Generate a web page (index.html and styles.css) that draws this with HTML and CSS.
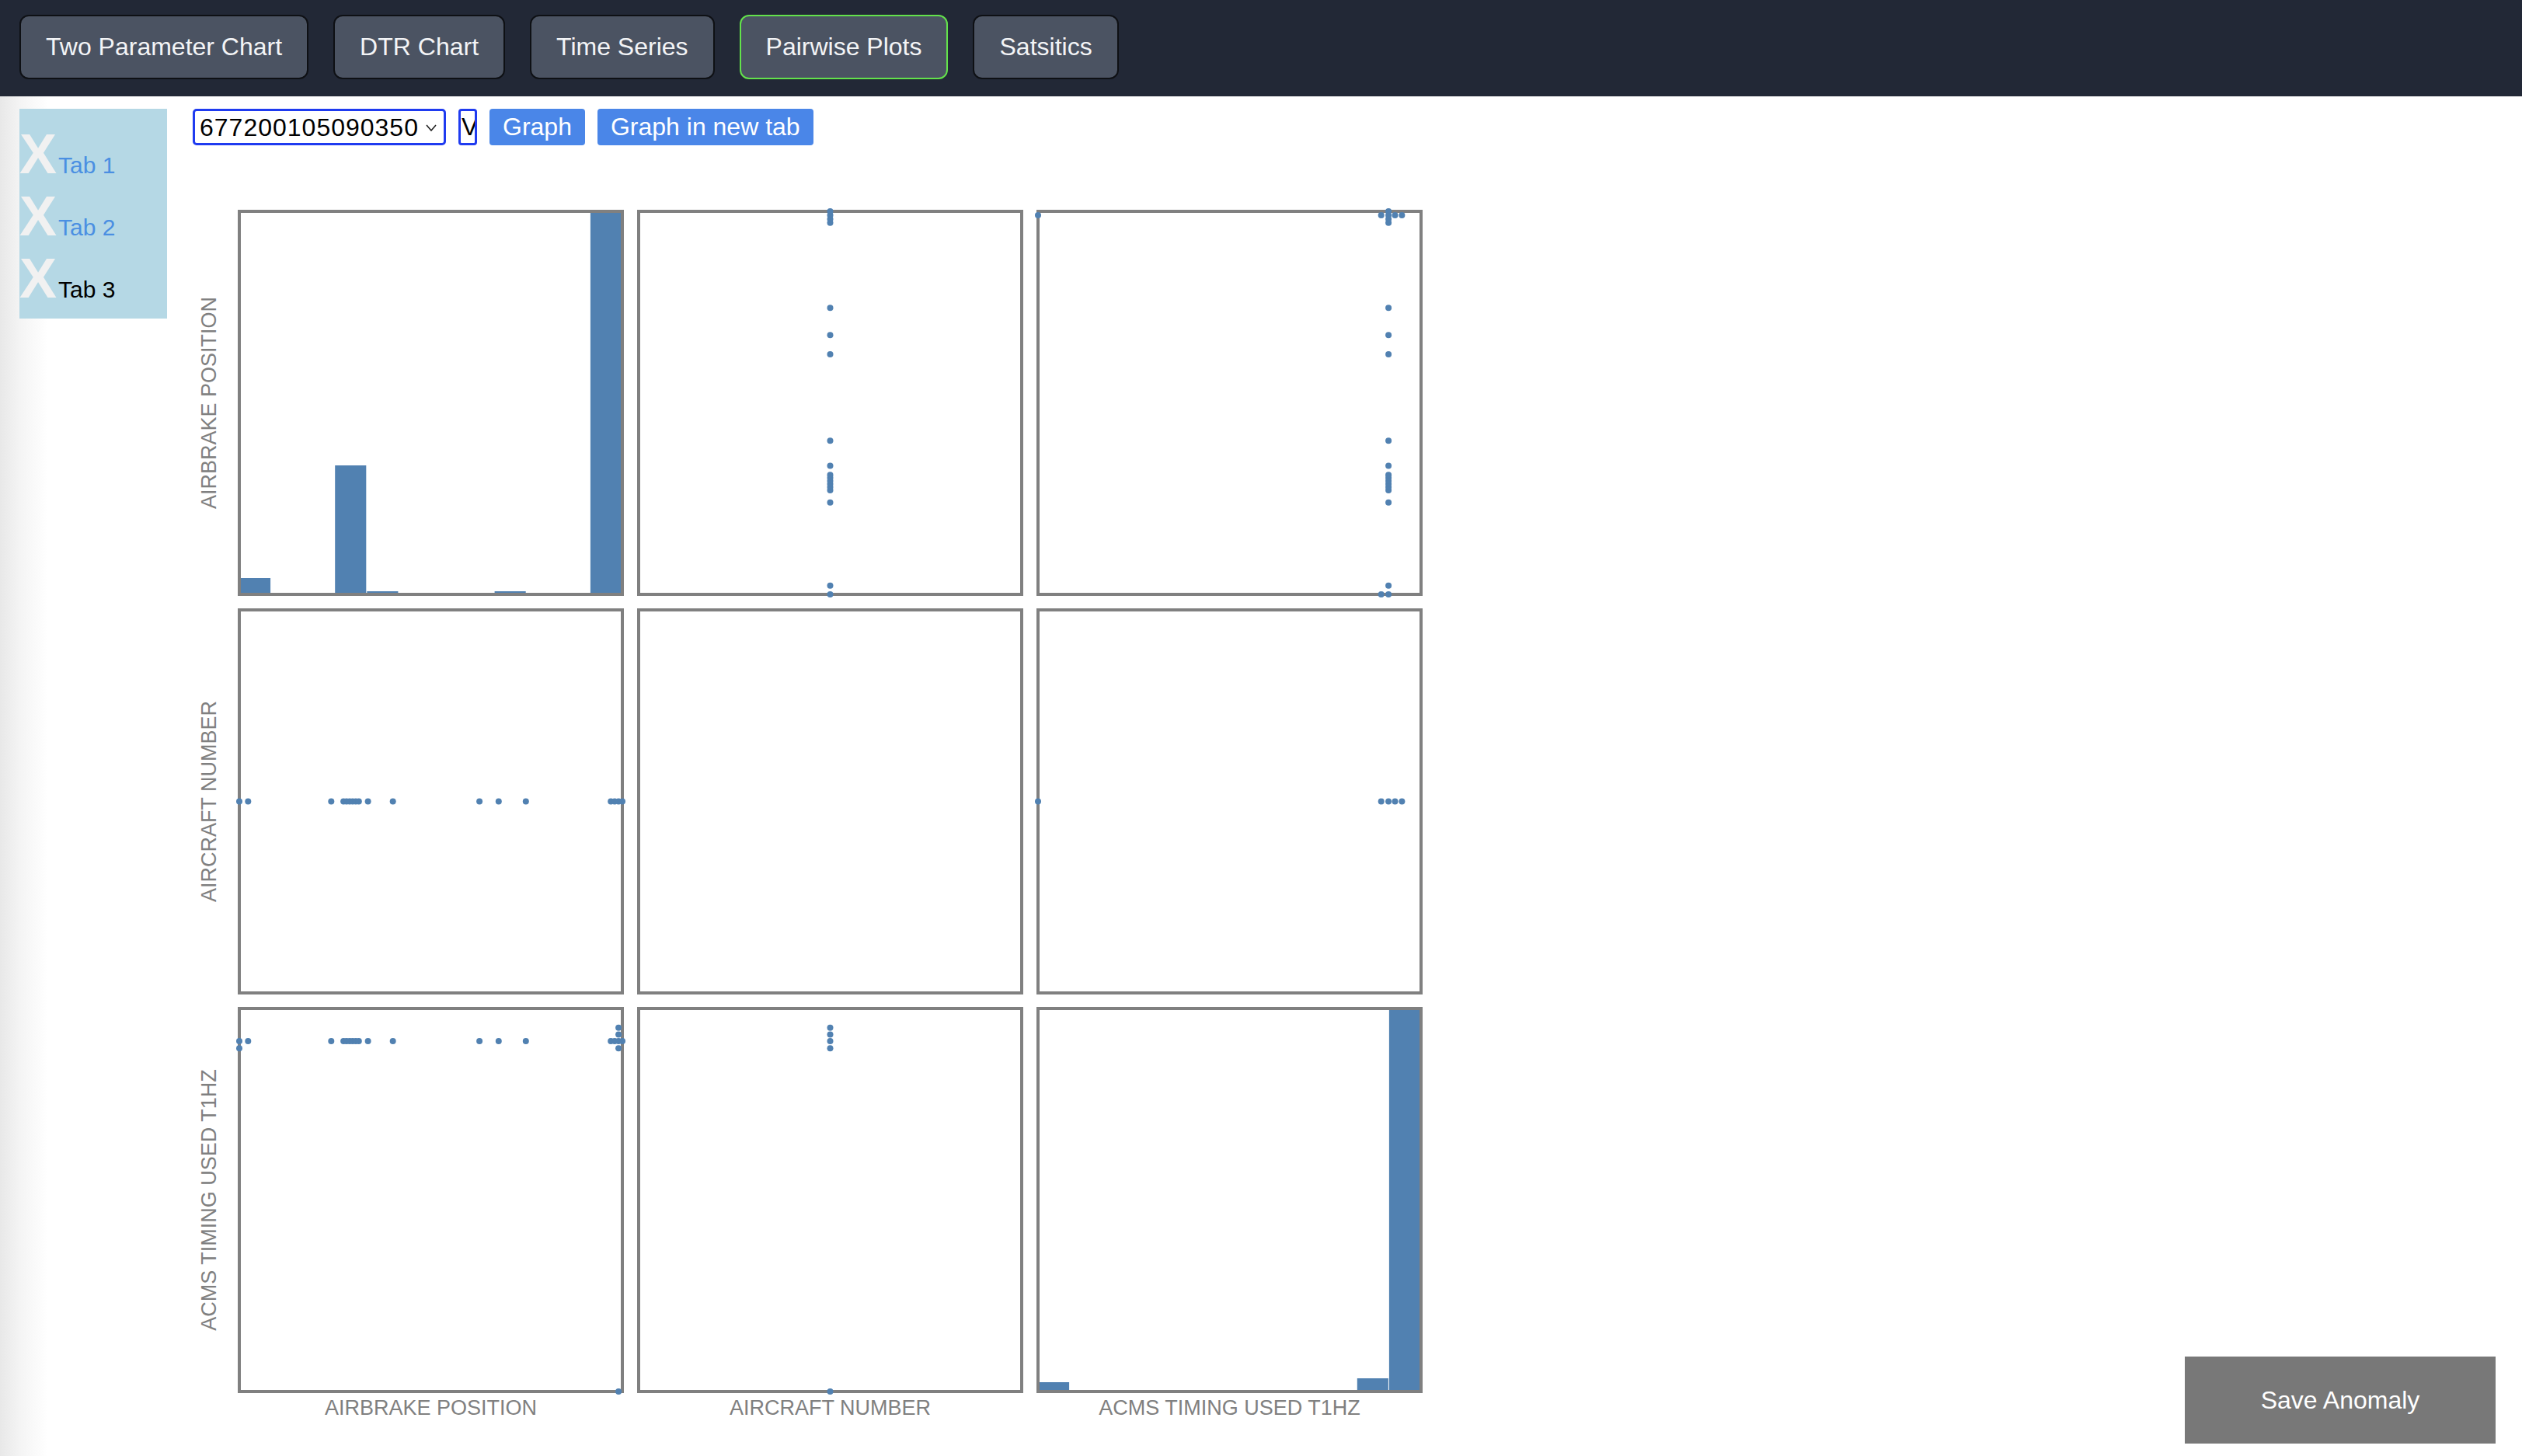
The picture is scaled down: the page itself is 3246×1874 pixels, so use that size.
FILE: index.html
```html
<!DOCTYPE html>
<html lang="en">
<head>
<meta charset="utf-8">
<title>Pairwise Plots</title>
<link rel="stylesheet" href="styles.css">
</head>
<body>
<nav class="topnav">
  <button class="nav-btn">Two Parameter Chart</button>
  <button class="nav-btn">DTR Chart</button>
  <button class="nav-btn">Time Series</button>
  <button class="nav-btn active">Pairwise Plots</button>
  <button class="nav-btn">Satsitics</button>
</nav>

<div class="layout">
  <aside class="sidebar">
    <div class="tab"><span class="tab-x">X</span><span class="tab-label">Tab 1</span></div>
    <div class="tab"><span class="tab-x">X</span><span class="tab-label">Tab 2</span></div>
    <div class="tab"><span class="tab-x">X</span><span class="tab-label current">Tab 3</span></div>
  </aside>

  <main class="content">
    <div class="controls">
      <label class="select-box">
        <select class="id-select"><option>677200105090350</option></select>
        <svg class="chevron" width="14" height="9" viewBox="0 0 14 9"><polyline points="1,1 7,8 13,1" fill="none" stroke="#222" stroke-width="1.6"/></svg>
      </label>
      <input class="v-input" type="text" value="V">
      <button class="graph-btn">Graph</button>
      <button class="graph-btn">Graph in new tab</button>
    </div>

    <div class="matrix">
      <!-- row 1 -->
      <svg class="ylabel" width="41" height="497" viewBox="0 0 41 497"><text transform="rotate(-90)" x="-248.5" y="30" text-anchor="middle">AIRBRAKE POSITION</text></svg>
      <svg class="panel" width="497" height="497" viewBox="0 0 497 497">
        <rect class="bg" x="2" y="2" width="493" height="493"/>
        <rect class="bar" x="2" y="474" width="40.1" height="21"/>
        <rect class="bar" x="84.2" y="493" width="40.1" height="2"/>
        <rect class="bar" x="125.2" y="329" width="40.1" height="166"/>
        <rect class="bar" x="166.3" y="491" width="40.1" height="4"/>
        <rect class="bar" x="289.6" y="493" width="40.1" height="2"/>
        <rect class="bar" x="330.6" y="491" width="40.1" height="4"/>
        <rect class="bar" x="453.9" y="2" width="41.1" height="493"/>
        <rect class="frame" x="2" y="2" width="493" height="493"/>
      </svg>
      <svg class="panel" width="497" height="497" viewBox="0 0 497 497">
        <rect class="bg frame" x="2" y="2" width="493" height="493"/>
        <g class="dots">
          <circle cx="248.5" cy="495" r="4"/><circle cx="248.5" cy="483.7" r="4"/><circle cx="248.5" cy="376.7" r="4"/>
          <circle cx="248.5" cy="360.9" r="4"/><circle cx="248.5" cy="357" r="4"/><circle cx="248.5" cy="353" r="4"/>
          <circle cx="248.5" cy="349.1" r="4"/><circle cx="248.5" cy="345.1" r="4"/><circle cx="248.5" cy="341.2" r="4"/>
          <circle cx="248.5" cy="329.4" r="4"/><circle cx="248.5" cy="297.3" r="4"/><circle cx="248.5" cy="185.9" r="4"/>
          <circle cx="248.5" cy="161.2" r="4"/><circle cx="248.5" cy="126.2" r="4"/><circle cx="248.5" cy="16.8" r="4"/>
          <circle cx="248.5" cy="11.9" r="4"/><circle cx="248.5" cy="6.9" r="4"/><circle cx="248.5" cy="2" r="4"/>
        </g>
      </svg>
      <svg class="panel" width="497" height="497" viewBox="0 0 497 497">
        <rect class="bg frame" x="2" y="2" width="493" height="493"/>
        <g class="dots">
          <circle cx="453.1" cy="495" r="4"/><circle cx="443.7" cy="495" r="4"/><circle cx="453.1" cy="483.7" r="4"/>
          <circle cx="453.1" cy="376.7" r="4"/><circle cx="453.1" cy="360.9" r="4"/><circle cx="453.1" cy="357" r="4"/>
          <circle cx="453.1" cy="353" r="4"/><circle cx="453.1" cy="349.1" r="4"/><circle cx="453.1" cy="345.1" r="4"/>
          <circle cx="453.1" cy="341.2" r="4"/><circle cx="453.1" cy="329.4" r="4"/><circle cx="453.1" cy="297.3" r="4"/>
          <circle cx="453.1" cy="185.9" r="4"/><circle cx="453.1" cy="161.2" r="4"/><circle cx="453.1" cy="126.2" r="4"/>
          <circle cx="453.1" cy="16.8" r="4"/><circle cx="453.1" cy="11.9" r="4"/><circle cx="453.1" cy="6.9" r="4"/>
          <circle cx="453.1" cy="2" r="4"/><circle cx="443.7" cy="6.9" r="4"/><circle cx="461.5" cy="6.9" r="4"/>
          <circle cx="470.4" cy="6.9" r="4"/><circle cx="2" cy="6.9" r="4"/>
        </g>
      </svg>

      <!-- row 2 -->
      <svg class="ylabel" width="41" height="497" viewBox="0 0 41 497"><text transform="rotate(-90)" x="-248.5" y="30" text-anchor="middle">AIRCRAFT NUMBER</text></svg>
      <svg class="panel" width="497" height="497" viewBox="0 0 497 497">
        <rect class="bg frame" x="2" y="2" width="493" height="493"/>
        <g class="dots">
          <circle cx="2" cy="248.5" r="4"/><circle cx="13.3" cy="248.5" r="4"/><circle cx="120.3" cy="248.5" r="4"/>
          <circle cx="136.1" cy="248.5" r="4"/><circle cx="140" cy="248.5" r="4"/><circle cx="144" cy="248.5" r="4"/>
          <circle cx="147.9" cy="248.5" r="4"/><circle cx="151.9" cy="248.5" r="4"/><circle cx="155.8" cy="248.5" r="4"/>
          <circle cx="167.6" cy="248.5" r="4"/><circle cx="199.7" cy="248.5" r="4"/><circle cx="311.1" cy="248.5" r="4"/>
          <circle cx="335.8" cy="248.5" r="4"/><circle cx="370.8" cy="248.5" r="4"/><circle cx="480.2" cy="248.5" r="4"/>
          <circle cx="485.1" cy="248.5" r="4"/><circle cx="490.1" cy="248.5" r="4"/><circle cx="495" cy="248.5" r="4"/>
        </g>
      </svg>
      <svg class="panel" width="497" height="497" viewBox="0 0 497 497">
        <rect class="bg frame" x="2" y="2" width="493" height="493"/>
      </svg>
      <svg class="panel" width="497" height="497" viewBox="0 0 497 497">
        <rect class="bg frame" x="2" y="2" width="493" height="493"/>
        <g class="dots">
          <circle cx="2" cy="248.5" r="4"/><circle cx="443.7" cy="248.5" r="4"/><circle cx="453.1" cy="248.5" r="4"/>
          <circle cx="461.5" cy="248.5" r="4"/><circle cx="470.4" cy="248.5" r="4"/>
        </g>
      </svg>

      <!-- row 3 -->
      <svg class="ylabel" width="41" height="497" viewBox="0 0 41 497"><text transform="rotate(-90)" x="-248.5" y="30" text-anchor="middle">ACMS TIMING USED T1HZ</text></svg>
      <svg class="panel" width="497" height="497" viewBox="0 0 497 497">
        <rect class="bg frame" x="2" y="2" width="493" height="493"/>
        <g class="dots">
          <circle cx="2" cy="43.9" r="4"/><circle cx="2" cy="53.3" r="4"/><circle cx="13.3" cy="43.9" r="4"/>
          <circle cx="120.3" cy="43.9" r="4"/><circle cx="136.1" cy="43.9" r="4"/><circle cx="140" cy="43.9" r="4"/>
          <circle cx="144" cy="43.9" r="4"/><circle cx="147.9" cy="43.9" r="4"/><circle cx="151.9" cy="43.9" r="4"/>
          <circle cx="155.8" cy="43.9" r="4"/><circle cx="167.6" cy="43.9" r="4"/><circle cx="199.7" cy="43.9" r="4"/>
          <circle cx="311.1" cy="43.9" r="4"/><circle cx="335.8" cy="43.9" r="4"/><circle cx="370.8" cy="43.9" r="4"/>
          <circle cx="480.2" cy="43.9" r="4"/><circle cx="485.1" cy="43.9" r="4"/><circle cx="490.1" cy="43.9" r="4"/>
          <circle cx="495" cy="43.9" r="4"/><circle cx="490.1" cy="53.3" r="4"/><circle cx="490.1" cy="35.5" r="4"/>
          <circle cx="490.1" cy="26.7" r="4"/><circle cx="490.1" cy="495" r="4"/>
        </g>
      </svg>
      <svg class="panel" width="497" height="497" viewBox="0 0 497 497">
        <rect class="bg frame" x="2" y="2" width="493" height="493"/>
        <g class="dots">
          <circle cx="248.5" cy="495" r="4"/><circle cx="248.5" cy="53.3" r="4"/><circle cx="248.5" cy="43.9" r="4"/>
          <circle cx="248.5" cy="35.5" r="4"/><circle cx="248.5" cy="26.7" r="4"/>
        </g>
      </svg>
      <svg class="panel" width="497" height="497" viewBox="0 0 497 497">
        <rect class="bg" x="2" y="2" width="493" height="493"/>
        <rect class="bar" x="2" y="483" width="40.1" height="12"/>
        <rect class="bar" x="412.8" y="478" width="40.1" height="17"/>
        <rect class="bar" x="453.9" y="2" width="41.1" height="493"/>
        <rect class="frame" x="2" y="2" width="493" height="493"/>
      </svg>
    </div>

    <div class="xaxis">
      <span></span>
      <div class="xlabel">AIRBRAKE POSITION</div>
      <div class="xlabel">AIRCRAFT NUMBER</div>
      <div class="xlabel">ACMS TIMING USED T1HZ</div>
    </div>
  </main>
</div>

<button class="save-btn">Save Anomaly</button>
</body>
</html>
```

FILE: styles.css
```css
html, body {
  margin: 0;
  padding: 0;
}

body {
  font-family: "Liberation Sans", Arial, sans-serif;
  background: linear-gradient(to right, #e8e8e8 0, #f5f5f5 28px, #ffffff 62px);
  min-height: 100vh;
  overflow: hidden;
}

/* ---------- top navigation ---------- */
.topnav {
  height: 124px;
  box-sizing: border-box;
  background: #222836;
  display: flex;
  align-items: flex-start;
  gap: 32px;
  padding: 19px 25px 0;
}

.nav-btn {
  font-family: "Liberation Sans", Arial, sans-serif;
  font-size: 32px;
  line-height: 47px;
  color: #f3f4f6;
  background: #4b5362;
  border: 2px solid #0e1014;
  border-radius: 12px;
  padding: 16px 32px;
  margin: 0;
}

.nav-btn.active {
  border-color: #63e24b;
}

/* ---------- layout ---------- */
.layout {
  display: flex;
  align-items: flex-start;
  gap: 33px;
  padding: 16px 0 0 25px;
}

.sidebar {
  width: 190px;
  height: 270px;
  box-sizing: border-box;
  padding-top: 18px;
  background: #b5d8e5;
}

.tab {
  font-size: 72px;
  line-height: 80px;
  white-space: nowrap;
}

.tab-x {
  color: #f1f1f1;
  font-weight: bold;
}

.tab-label {
  font-size: 30px;
  line-height: 1;
  color: #4a8fe2;
  margin-left: 2px;
}

.tab-label.current {
  color: #000000;
}

.content {
  display: flex;
  flex-direction: column;
}

/* ---------- controls ---------- */
.controls {
  display: flex;
  gap: 16px;
  height: 47px;
}

.select-box {
  display: flex;
  align-items: center;
  width: 326px;
  height: 47px;
  box-sizing: border-box;
  border: 3px solid #1f3bf0;
  border-radius: 5px;
  padding: 0 9px 0 6px;
  background: #ffffff;
}

.id-select {
  appearance: none;
  -webkit-appearance: none;
  border: none;
  outline: none;
  background: transparent;
  padding: 0;
  margin: 0;
  flex: 1;
  min-width: 0;
  font-family: "Liberation Sans", Arial, sans-serif;
  font-size: 32px;
  letter-spacing: 1px;
  color: #000000;
}

.chevron {
  flex: none;
  margin-top: 2px;
}

.v-input {
  width: 24px;
  height: 47px;
  box-sizing: border-box;
  border: 3px solid #1f3bf0;
  border-radius: 4px;
  padding: 0 0 0 1px;
  margin: 0;
  font-family: "Liberation Sans", Arial, sans-serif;
  font-size: 32px;
  color: #000000;
  background: #ffffff;
  outline: none;
}

.graph-btn {
  height: 47px;
  background: #4a86e8;
  color: #ffffff;
  border: none;
  border-radius: 4px;
  padding: 0 17px;
  margin: 0;
  font-family: "Liberation Sans", Arial, sans-serif;
  font-size: 32px;
  line-height: 47px;
}

/* ---------- scatter matrix ---------- */
.matrix {
  margin-top: 83px;
  display: grid;
  grid-template-columns: 41px repeat(3, 497px);
  column-gap: 17px;
  row-gap: 16px;
}

.ylabel {
  display: block;
  overflow: visible;
}

.ylabel text {
  font-family: "Liberation Sans", Arial, sans-serif;
  font-size: 27px;
  fill: #808080;
}

.panel {
  display: block;
  overflow: visible;
}

.panel .bg {
  fill: #ffffff;
}

.panel .frame {
  fill: none;
  stroke: #808080;
  stroke-width: 4;
}

.panel .bg.frame {
  fill: #ffffff;
}

.panel .bar {
  fill: #5181b1;
}

.panel .dots circle {
  fill: #5181b1;
}

.xaxis {
  display: grid;
  grid-template-columns: 41px repeat(3, 497px);
  column-gap: 17px;
  margin-top: 4px;
}

.xlabel {
  text-align: center;
  font-size: 27px;
  line-height: 31px;
  color: #808080;
}

/* ---------- floating save button ---------- */
.save-btn {
  position: fixed;
  right: 34px;
  bottom: 16px;
  width: 400px;
  height: 112px;
  background: #787878;
  color: #ffffff;
  border: none;
  padding: 0;
  font-family: "Liberation Sans", Arial, sans-serif;
  font-size: 32px;
}
```
